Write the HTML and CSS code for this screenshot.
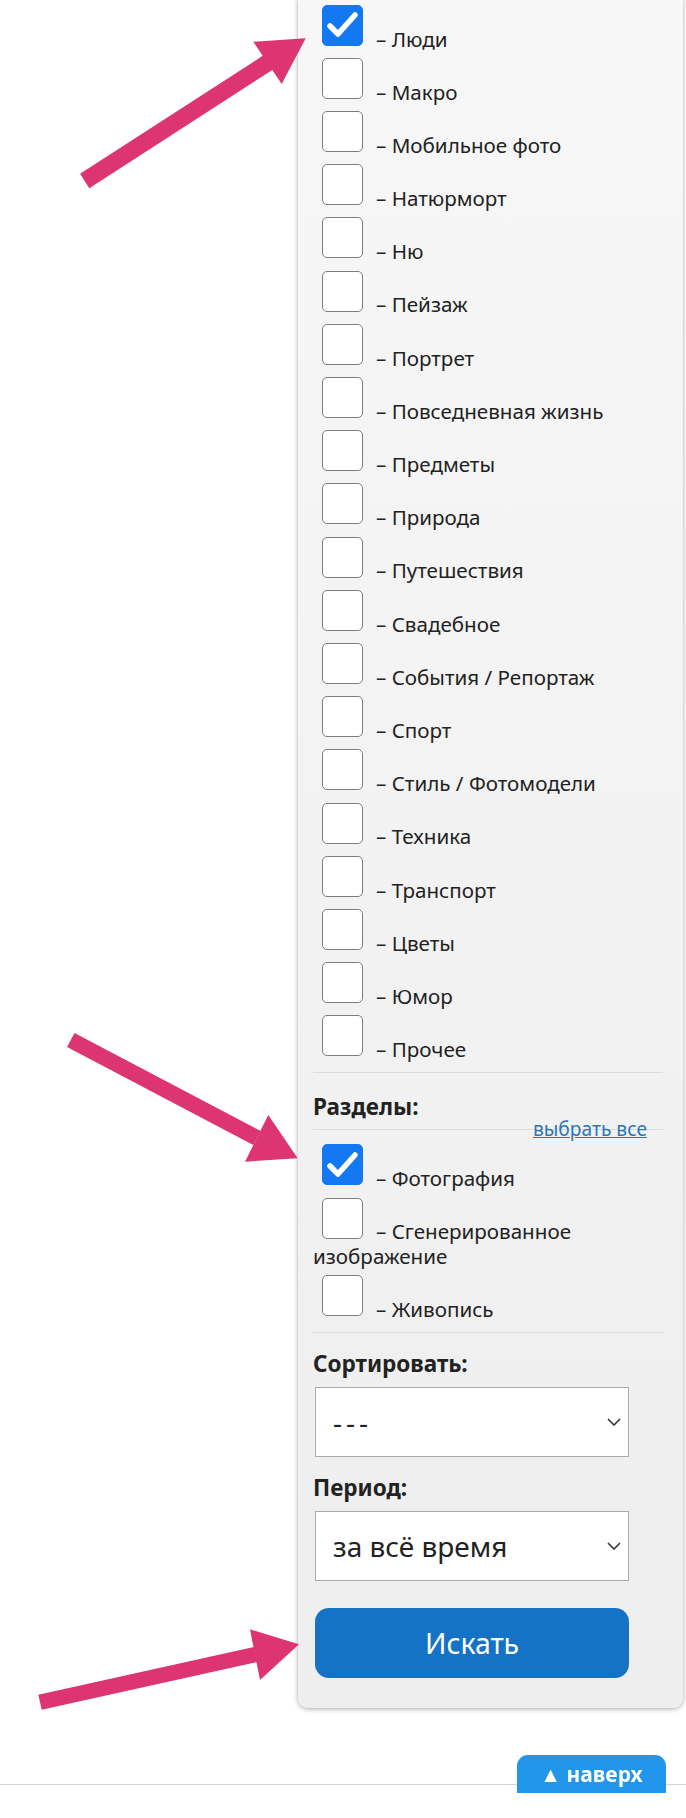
FILE: index.html
```html
<!DOCTYPE html>
<html>
<head>
    <meta charset="utf-8">
    <link rel="stylesheet" href="styles.css">
</head>
<body>
    <div class="page">
        <form class="filter">
            <div class="group">
                <label class="opt"><span class="box checked"><svg viewBox="0 0 41 41"><polyline points="8,22 16,30 33,11"/></svg></span>– Люди</label>
                <label class="opt"><span class="box"></span>– Макро</label>
                <label class="opt"><span class="box"></span>– Мобильное фото</label>
                <label class="opt"><span class="box"></span>– Натюрморт</label>
                <label class="opt"><span class="box"></span>– Ню</label>
                <label class="opt"><span class="box"></span>– Пейзаж</label>
                <label class="opt"><span class="box"></span>– Портрет</label>
                <label class="opt"><span class="box"></span>– Повседневная жизнь</label>
                <label class="opt"><span class="box"></span>– Предметы</label>
                <label class="opt"><span class="box"></span>– Природа</label>
                <label class="opt"><span class="box"></span>– Путешествия</label>
                <label class="opt"><span class="box"></span>– Свадебное</label>
                <label class="opt"><span class="box"></span>– События / Репортаж</label>
                <label class="opt"><span class="box"></span>– Спорт</label>
                <label class="opt"><span class="box"></span>– Стиль / Фотомодели</label>
                <label class="opt"><span class="box"></span>– Техника</label>
                <label class="opt"><span class="box"></span>– Транспорт</label>
                <label class="opt"><span class="box"></span>– Цветы</label>
                <label class="opt"><span class="box"></span>– Юмор</label>
                <label class="opt"><span class="box"></span>– Прочее</label>
            </div>

            <div class="group-title">Разделы:</div>
            <div class="group sections">
                <a href="#" class="select-all">выбрать все</a>
                <label class="opt"><span class="box checked"><svg viewBox="0 0 41 41"><polyline points="8,22 16,30 33,11"/></svg></span>– Фотография</label>
                <label class="opt"><span class="box"></span>– Сгенерированное изображение</label>
                <label class="opt"><span class="box"></span>– Живопись</label>
            </div>

            <div class="field-label">Сортировать:</div>
            <div class="select">
                <span class="dashes">---</span>
                <svg class="chevron" viewBox="0 0 14 8"><polyline points="1,1 7,7 13,1"/></svg>
            </div>

            <div class="field-label">Период:</div>
            <div class="select">
                <span>за всё время</span>
                <svg class="chevron" viewBox="0 0 14 8"><polyline points="1,1 7,7 13,1"/></svg>
            </div>

            <button type="button" class="search">Искать</button>
        </form>

        <div class="footer"></div>

        <a href="#" class="to-top">▲ наверх</a>

        <!-- pointers drawn on top of the page -->
        <svg class="arrows" viewBox="0 0 686 1818">
            <line x1="84.7" y1="181" x2="268" y2="62.5" stroke-width="17"/>
            <polygon points="305.7,38.3 253.3,41.7 281.7,84"/>

            <line x1="70.8" y1="1040" x2="257" y2="1138" stroke-width="16"/>
            <polygon points="297.7,1158.3 268.3,1115 245,1161.7"/>

            <line x1="40" y1="1702.3" x2="255.5" y2="1654.5" stroke-width="15.5"/>
            <polygon points="299,1644.3 250,1629.3 260,1680"/>
        </svg>
    </div>
</body>
</html>
```

FILE: styles.css
```css
body {
    margin: 0;
    background: #fff;
    font-family: "Noto Sans", sans-serif;
    color: #222;
}

.page {
    position: relative;
    width: 686px;
    height: 1818px;
    overflow: hidden;
}

.filter {
    box-sizing: border-box;
    width: 385px;
    margin: -2.5px 0 0 298px;
    padding: 0 20px 30px 15px;
    background: linear-gradient(to bottom, #f7f7f7, #eeeeee);
    border-radius: 0 0 10px 10px;
    box-shadow: 0 1px 5px rgba(0, 0, 0, 0.35);
}

.group {
    padding-bottom: 11px;
    border-bottom: 1px solid #dcdcdc;
}

.sections {
    padding-top: 7px;
}

.opt {
    display: block;
    font-size: 20.6px;
    line-height: 24px;
}

.box {
    display: inline-block;
    box-sizing: border-box;
    width: 41px;
    height: 41px;
    margin: 7.2px 13px 1px 9px;
    border: 1.5px solid #7d7d7d;
    border-radius: 5px;
    background: #fff;
    vertical-align: baseline;
    overflow: hidden;
}

.box.checked {
    background: #1478f2;
    border-color: #1478f2;
}

.box svg {
    display: block;
    width: 41px;
    height: 41px;
    margin: -1.5px;
    fill: none;
    stroke: #fff;
    stroke-width: 5.5;
    stroke-linecap: round;
    stroke-linejoin: round;
}

.group-title {
    padding: 22px 0 10px;
    font-size: 22.5px;
    line-height: 24px;
    font-weight: bold;
    border-bottom: 1px solid #dcdcdc;
}

.select-all {
    float: right;
    margin: -19px 16px 0 0;
    font-size: 19.2px;
    line-height: 22px;
    color: #2b78b4;
}

.field-label {
    margin-top: 19px;
    font-size: 22.5px;
    line-height: 24px;
    font-weight: bold;
}

.field-label + .select {
    margin-top: 11px;
}

.select {
    box-sizing: border-box;
    display: flex;
    align-items: center;
    justify-content: space-between;
    width: 314px;
    height: 70px;
    margin-left: 2px;
    padding: 0 7px 0 17px;
    background: #fff;
    border: 1px solid #ababab;
    font-size: 28px;
    color: #222;
}

.dashes {
    letter-spacing: 4px;
}

.chevron {
    width: 14px;
    height: 8px;
    fill: none;
    stroke: #333;
    stroke-width: 1.6;
}

.search {
    display: block;
    width: 314px;
    height: 70px;
    margin: 27px 0 0 2px;
    border: none;
    border-radius: 14px;
    background: #1473c5;
    color: #fff;
    font-family: "Noto Sans", sans-serif;
    font-size: 28.4px;
}

.footer {
    margin-top: 76px;
    border-top: 1px solid #d4d4d4;
}

.to-top {
    position: absolute;
    left: 517px;
    top: 1755px;
    width: 149px;
    height: 38px;
    border-radius: 11px 11px 0 0;
    background: #2196ea;
    color: #fff;
    font-size: 21px;
    font-weight: bold;
    line-height: 38px;
    text-align: center;
    text-decoration: none;
    filter: blur(0.6px);
}

.arrows {
    position: absolute;
    left: 0;
    top: 0;
    width: 686px;
    height: 1818px;
    pointer-events: none;
    fill: #dd3472;
    stroke: #dd3472;
}

.arrows polygon {
    stroke: none;
}
```
